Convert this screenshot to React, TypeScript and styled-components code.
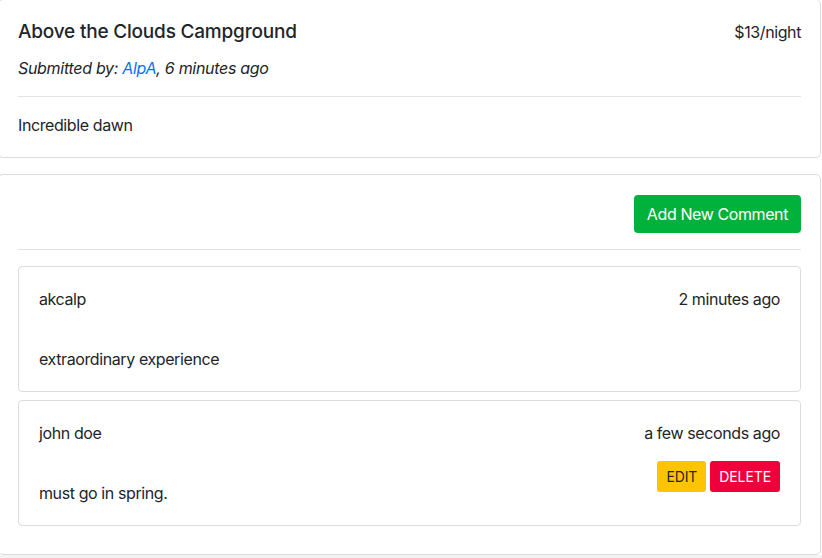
import React from "react";
import styled, { createGlobalStyle } from "styled-components";

const Global = createGlobalStyle`
  html, body { margin: 0; padding: 0; background: #ffffff; }
  body {
    font-family: Inter, "Noto Sans", "Liberation Sans", sans-serif;
    font-size: 16px;
    line-height: 24px;
    letter-spacing: -0.4px;
    color: #212529;
    overflow: hidden;
  }
`;

const Page = styled.div`
  width: 822px;
  height: 558px;
  overflow: hidden;
  display: flex;
  flex-direction: column;
  background: #f3f3f3;
`;

const Column = styled.div`
  background: #ffffff;
  margin-top: -1px;
`;

const Card = styled.section<{ $gap?: boolean }>`
  width: 823px;
  margin-left: -2px;
  box-sizing: border-box;
  border: 1px solid #dcdcdc;
  border-radius: 5px;
  background: #ffffff;
  padding: 20px 19px 20px 19px;
  margin-top: ${(p) => (p.$gap ? "16px" : "0")};
`;

const TitleRow = styled.div`
  display: flex;
  justify-content: space-between;
  align-items: center;
  margin-bottom: 12px;
`;

const Title = styled.h5`
  margin: 0;
  font-size: 19px;
  font-weight: 500;
  line-height: 24px;
  letter-spacing: -0.2px;
`;

const Price = styled.span`
  font-size: 16px;
`;

const Meta = styled.p`
  margin: 0;
  font-style: italic;
  letter-spacing: -0.3px;
`;

const Link = styled.a`
  color: #0d6efd;
  text-decoration: none;
`;

const Rule = styled.hr`
  border: 0;
  border-top: 1px solid #e3e3e3;
  margin: 16px 0;
`;

const Text = styled.p`
  margin: 0;
`;

const Toolbar = styled.div`
  display: flex;
  justify-content: flex-end;
`;

const Button = styled.button<{ $variant: "success" | "warning" | "danger"; $small?: boolean }>`
  font-family: inherit;
  letter-spacing: ${(p) => (p.$small ? "-0.1px" : "-0.4px")};
  border: 0;
  border-radius: ${(p) => (p.$small ? "3px" : "4px")};
  font-size: ${(p) => (p.$small ? "14px" : "16px")};
  line-height: ${(p) => (p.$small ? "21px" : "24px")};
  padding: ${(p) => (p.$small ? "5px 9px" : "7px 13px")};
  text-transform: ${(p) => (p.$small ? "uppercase" : "none")};
  background: ${(p) =>
    p.$variant === "success" ? "#00b13c" : p.$variant === "warning" ? "#ffc400" : "#f0003a"};
  color: ${(p) => (p.$variant === "warning" ? "#212529" : "#ffffff")};
  cursor: pointer;
`;

const CommentList = styled.div`
  display: flex;
  flex-direction: column;
  gap: 8px;
  margin-bottom: 8px;
`;

const Comment = styled.article`
  border: 1px solid #dcdcdc;
  border-radius: 4px;
  padding: 20px;
`;

const CommentHeader = styled.div`
  display: flex;
  justify-content: space-between;
  margin-bottom: 16px;
`;

const CommentBody = styled.div`
  display: flex;
  justify-content: space-between;
  align-items: flex-end;
  min-height: 44px;
`;

const Actions = styled.div`
  display: flex;
  gap: 4px;
  margin-bottom: 13px;
`;

const comments = [
  { author: "akcalp", time: "2 minutes ago", text: "extraordinary experience", own: false },
  { author: "john doe", time: "a few seconds ago", text: "must go in spring.", own: true },
];

export default function App() {
  return (
    <>
      <Global />
      <Page>
        <Column>
          <Card>
            <TitleRow>
              <Title>Above the Clouds Campground</Title>
              <Price>$13/night</Price>
            </TitleRow>
            <Meta>
              Submitted by: <Link href="#">AlpA</Link>, 6 minutes ago
            </Meta>
            <Rule />
            <Text>Incredible dawn</Text>
          </Card>
          <Card $gap>
            <Toolbar>
              <Button $variant="success">Add New Comment</Button>
            </Toolbar>
            <Rule />
            <CommentList>
              {comments.map((c) => (
                <Comment key={c.author}>
                  <CommentHeader>
                    <span>{c.author}</span>
                    <span>{c.time}</span>
                  </CommentHeader>
                  <CommentBody>
                    <Text>{c.text}</Text>
                    {c.own && (
                      <Actions>
                        <Button $variant="warning" $small>Edit</Button>
                        <Button $variant="danger" $small>Delete</Button>
                      </Actions>
                    )}
                  </CommentBody>
                </Comment>
              ))}
            </CommentList>
          </Card>
        </Column>
      </Page>
    </>
  );
}
